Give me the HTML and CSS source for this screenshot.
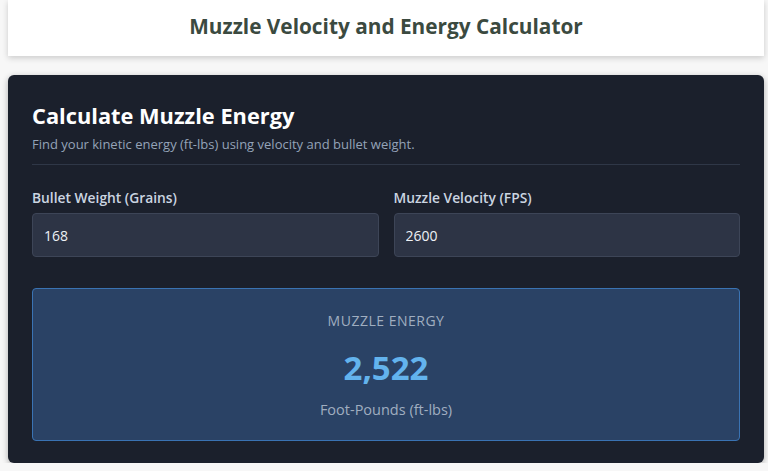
FILE: index.html
```html
<!DOCTYPE html>
<html lang="en">
  <head>
    <meta charset="UTF-8" />
    <meta name="viewport" content="width=device-width, initial-scale=1.0" />
    <title>Muzzle Velocity and Energy Calculator</title>
    <link rel="stylesheet" href="styles.css">
  </head>
  <body>
    <div class="page">
      <!-- header -->
      <div class="site-header">
        <h2>Muzzle Velocity and Energy Calculator</h2>
      </div>

      <!-- calculator card -->
      <div class="calc-card">
        <h1>Calculate Muzzle Energy</h1>
        <p class="subtitle">Find your kinetic energy (ft-lbs) using velocity and bullet weight.</p>

        <div class="field-row">
          <div class="field">
            <label for="weight">Bullet Weight (Grains)</label>
            <input type="text" id="weight" value="168" />
          </div>
          <div class="field">
            <label for="velocity">Muzzle Velocity (FPS)</label>
            <input type="text" id="velocity" value="2600" />
          </div>
        </div>

        <div class="result-box">
          <div class="result-label">Muzzle Energy</div>
          <div class="result-value">2,522</div>
          <div class="result-unit">Foot-Pounds (ft-lbs)</div>
        </div>
      </div>
    </div>
  </body>
</html>
```

FILE: styles.css
```css
body {
  margin: 0;
  background-color: #f7f7f7;
  font-family: "Open Sans", "Noto Sans", Arial, sans-serif;
}

.page {
  width: 756px;
  margin-left: 8px;
}

.site-header {
  background: white;
  height: 56px;
  display: flex;
  align-items: center;
  justify-content: center;
  box-shadow: 0 2px 6px rgba(0, 0, 0, 0.18);
}

.site-header h2 {
  margin: 0 0 5px 0;
  font-size: 20.8px;
  font-weight: 700;
  color: #3b4a40;
}

.calc-card {
  margin-top: 19px;
  background-color: #1b202c;
  border-radius: 6px;
  padding: 26px 24px 22px 24px;
  box-shadow: 0 2px 6px rgba(0, 0, 0, 0.3);
}

.calc-card h1 {
  margin: 0;
  font-size: 21.8px;
  font-weight: 700;
  color: #ffffff;
  line-height: 30px;
}

.subtitle {
  margin: 4px 0 0 0;
  font-size: 13px;
  line-height: 18px;
  color: #94a3b8;
  padding-bottom: 11px;
  border-bottom: 1px solid #2f3747;
}

.field-row {
  display: grid;
  grid-template-columns: 1fr 1fr;
  gap: 15px;
  margin-top: 23px;
}

.field label {
  display: block;
  font-size: 13.8px;
  line-height: 19px;
  font-weight: 600;
  color: #cbd5e1;
  margin-bottom: 6px;
}

.field input {
  display: block;
  width: 100%;
  box-sizing: border-box;
  height: 44px;
  padding: 0 11px;
  background-color: #2d3445;
  border: 1px solid #3d4557;
  border-radius: 4px;
  color: #eef1f5;
  font-family: inherit;
  font-size: 14px;
}

.result-box {
  margin-top: 31px;
  background-color: #2a4265;
  border: 1px solid #3a73b3;
  border-radius: 4px;
  text-align: center;
  padding: 22px 0 20px 0;
}

.result-label {
  font-size: 14px;
  line-height: 19px;
  text-transform: uppercase;
  letter-spacing: 0.5px;
  color: #a0aec0;
}

.result-value {
  margin-top: 16px;
  font-size: 33px;
  font-weight: 700;
  color: #63b3ed;
  line-height: 44px;
}

.result-unit {
  margin-top: 10px;
  font-size: 14.5px;
  line-height: 20px;
  color: #a0aec0;
}
```
